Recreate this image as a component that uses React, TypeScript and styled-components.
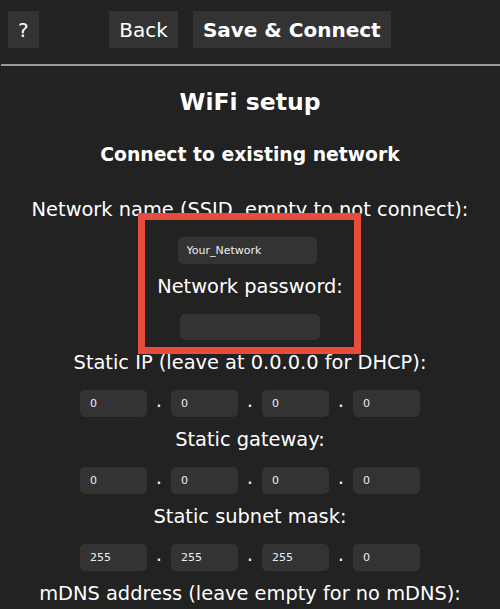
import React from "react";
import styled, { createGlobalStyle } from "styled-components";

const Global = createGlobalStyle`
  html, body {
    margin: 0;
    padding: 0;
    background: #222;
  }
  body {
    font-family: "DejaVu Sans", Verdana, sans-serif;
    color: #fff;
    overflow: hidden;
  }
`;

const Page = styled.form`
  position: relative;
  width: 500px;
  min-height: 609px;
  background: #222;
  display: flex;
  flex-direction: column;
  align-items: center;
  text-align: center;
`;

const Toolbar = styled.div`
  width: 100%;
  box-sizing: border-box;
  display: grid;
  grid-template-columns: 1fr auto 1fr;
  align-items: center;
  padding: 11px 8px 0;
`;

const Center = styled.div`
  display: flex;
  gap: 15px;
`;

const Button = styled.button<{ $bold?: boolean }>`
  height: 37px;
  box-sizing: border-box;
  padding: 2px 10px 0;
  border: none;
  border-radius: 0;
  background: #333;
  color: #fff;
  font-family: "DejaVu Sans", Verdana, sans-serif;
  font-size: 20px;
  font-weight: ${(p) => (p.$bold ? 700 : 400)};
  line-height: 35px;
  justify-self: start;
`;

const Rule = styled.hr`
  width: 100%;
  box-sizing: border-box;
  margin: 16px 0 0 1px;
  border: none;
  height: 2px;
  background: #999;
`;

const Title = styled.h2`
  margin: 21px 0 0;
  font-size: 23.5px;
  line-height: 30px;
  font-weight: 700;
`;

const Subtitle = styled.h3`
  margin: 26px 0 0;
  font-size: 18.8px;
  line-height: 24px;
  font-weight: 700;
`;

const Label = styled.div<{ $first?: boolean }>`
  margin-top: ${(p) => (p.$first ? "23px" : "0")};
  font-size: 19.4px;
  line-height: 40px;
  white-space: nowrap;
`;

const TextInput = styled.input<{ $w: number; $h?: number; $shift?: number }>`
  box-sizing: border-box;
  width: ${(p) => p.$w}px;
  height: ${(p) => p.$h ?? 27}px;
  margin: 7px 0 3px;
  transform: translateX(${(p) => p.$shift ?? 0}px);
  padding: 0 9px;
  border: none;
  border-radius: 5px;
  background: #333;
  color: #eee;
  font-family: "DejaVu Sans", Verdana, sans-serif;
  font-size: 11px;
  outline: none;
`;

const IpRow = styled.div`
  display: flex;
  align-items: baseline;
  margin: 7px 0 3px;
`;

const IpInput = styled.input`
  box-sizing: border-box;
  width: 67px;
  height: 27px;
  padding: 0 10px;
  border: none;
  border-radius: 5px;
  background: #333;
  color: #eee;
  font-family: "DejaVu Sans", Verdana, sans-serif;
  font-size: 11px;
  outline: none;
`;

const Dot = styled.span`
  width: 24px;
  font-size: 20px;
  line-height: 20px;
  color: #eee;
`;

const Highlight = styled.div`
  position: absolute;
  left: 138px;
  top: 213px;
  width: 223px;
  height: 141px;
  box-sizing: border-box;
  border: 7px solid #e74c3c;
  pointer-events: none;
`;

const IpField = ({ values }: { values: string[] }) => (
  <IpRow>
    {values.map((v, i) => (
      <React.Fragment key={i}>
        {i > 0 && <Dot>.</Dot>}
        <IpInput defaultValue={v} />
      </React.Fragment>
    ))}
  </IpRow>
);

export default function App() {
  return (
    <>
      <Global />
      <Page onSubmit={(e) => e.preventDefault()}>
        <Toolbar>
          <Button type="button">?</Button>
          <Center>
            <Button type="button">Back</Button>
            <Button type="submit" $bold>
              Save &amp; Connect
            </Button>
          </Center>
          <span />
        </Toolbar>
        <Rule />
        <Title>WiFi setup</Title>
        <Subtitle>Connect to existing network</Subtitle>
        <Label $first>Network name (SSID, empty to not connect):</Label>
        <TextInput $w={139} $shift={-3} defaultValue="Your_Network" />
        <Label>Network password:</Label>
        <TextInput $w={140} $h={26} type="password" />
        <Label>Static IP (leave at 0.0.0.0 for DHCP):</Label>
        <IpField values={["0", "0", "0", "0"]} />
        <Label>Static gateway:</Label>
        <IpField values={["0", "0", "0", "0"]} />
        <Label>Static subnet mask:</Label>
        <IpField values={["255", "255", "255", "0"]} />
        <Label>mDNS address (leave empty for no mDNS):</Label>
        <Highlight />
      </Page>
    </>
  );
}
